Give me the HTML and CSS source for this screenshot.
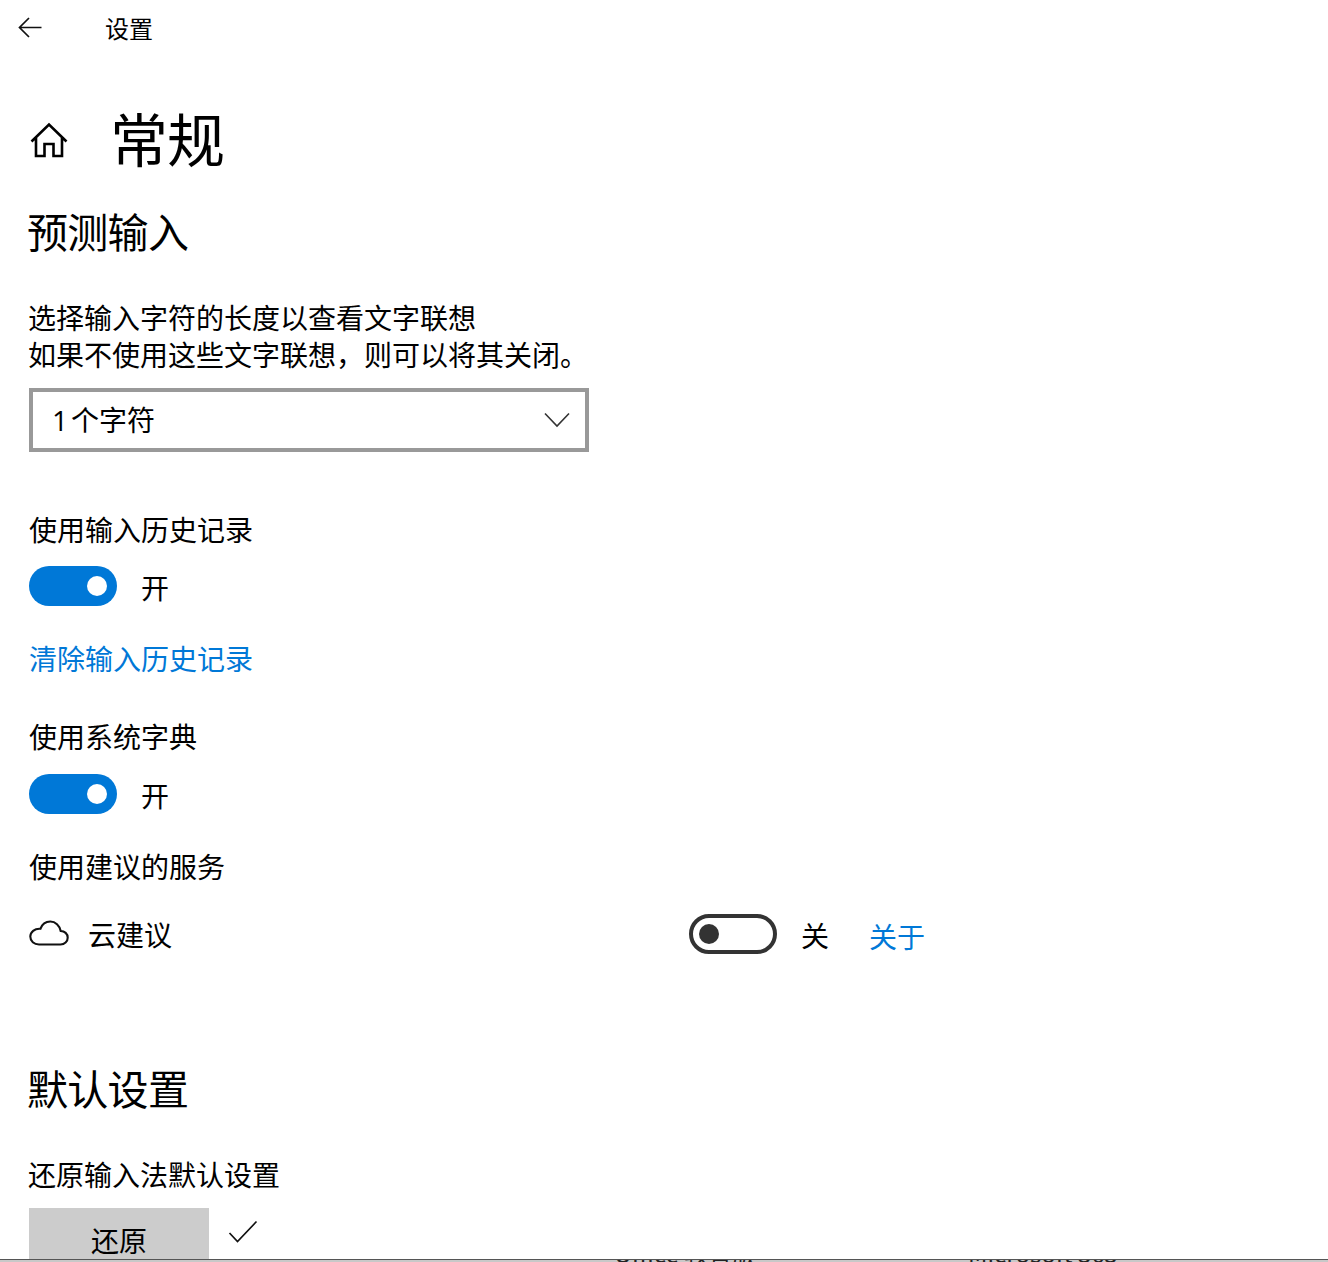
FILE: index.html
```html
<!DOCTYPE html>
<html lang="zh-CN">
<head>
<meta charset="utf-8">
<title>设置</title>
<link rel="stylesheet" href="styles.css">
</head>
<body>
<div class="page">
  <header class="topbar">
    <svg class="back-icon" width="24" height="22" viewBox="0 0 24 22"><path d="M23.5 10.5H1.5M11 1L1.5 10.5L11 20" fill="none" stroke="#111" stroke-width="1.7"/></svg>
    <span class="topbar-title">设置</span>
  </header>
  <main class="content">
    <div class="title-row">
      <svg class="home-icon" width="38" height="36" viewBox="0 0 38 36"><path d="M1.5 19.5L19 2.5L36.5 19.5M6 15.5V34H14.5V22H23.5V34H32V15.5" fill="none" stroke="#000" stroke-width="2.6"/></svg>
      <h1 class="title">常规</h1>
    </div>
    <h2 class="section-heading first-heading">预测输入</h2>
    <p class="desc">选择输入字符的长度以查看文字联想<br>如果不使用这些文字联想，则可以将其关闭。</p>
    <div class="select">
      <span class="select-text"><span class="select-num">1</span>个字符</span>
      <svg width="26" height="16" viewBox="0 0 26 16"><path d="M1 1.5L13 14L25 1.5" fill="none" stroke="#333" stroke-width="1.6"/></svg>
    </div>
    <div class="label label-history">使用输入历史记录</div>
    <div class="toggle-row row-history">
      <span class="toggle on"><i class="knob"></i></span>
      <span class="state">开</span>
    </div>
    <a class="link link-clear">清除输入历史记录</a>
    <div class="label label-dict">使用系统字典</div>
    <div class="toggle-row row-dict">
      <span class="toggle on"><i class="knob"></i></span>
      <span class="state">开</span>
    </div>
    <div class="label label-service">使用建议的服务</div>
    <div class="service-row">
      <div class="service-name">
        <svg class="cloud-icon" width="40" height="26" viewBox="0 0 40 26"><path d="M10 24.5H31.5C35.5 24.5 38.7 21.7 38.7 17.7C38.7 13.8 35.6 11 31.7 11C30.6 5.5 26.4 1.5 21.3 1.5C16.8 1.5 13 4.4 11.4 8.8C5.5 8.4 1.3 12 1.3 16.6C1.3 21.2 5 24.5 10 24.5Z" fill="none" stroke="#111" stroke-width="2.1"/></svg>
        <span>云建议</span>
      </div>
      <span class="toggle off"><i class="knob"></i></span>
      <span class="state">关</span>
      <a class="link link-about">关于</a>
    </div>
    <h2 class="section-heading defaults-heading">默认设置</h2>
    <div class="label label-restore">还原输入法默认设置</div>
    <div class="restore-row">
      <button class="restore-btn">还原</button>
      <svg class="check-icon" width="30" height="24" viewBox="0 0 30 24"><path d="M1.5 13L9.5 21.5L28.5 1.5" fill="none" stroke="#111" stroke-width="1.7"/></svg>
    </div>
  </main>
  <footer class="taskbar">
    <span class="task-one">Office 教育版</span>
    <span class="task-two">Microsoft 365</span>
  </footer>
</div>
</body>
</html>
```

FILE: styles.css
```css
* { box-sizing: border-box; }
html, body { margin: 0; padding: 0; background: #fff; }
body { font-family: "Noto Sans CJK SC", "Liberation Sans", sans-serif; color: #000; }
.page { position: relative; width: 1328px; height: 1262px; overflow: hidden; }

.topbar { display: flex; align-items: center; height: 58px; padding-left: 18px; }
.back-icon { display: block; margin-top: -3px; }
.topbar-title { margin-left: 63px; margin-top: -2px; font-size: 24px; line-height: 30px; }

.content { padding-left: 29px; }

.title-row { display: flex; align-items: center; height: 80px; margin-top: 42px; }
.home-icon { display: block; margin-left: 1px; margin-top: -1px; }
.title { margin: -6px 0 0 42px; font-size: 58px; font-weight: 400; letter-spacing: -1px; line-height: 80px; }

.section-heading { margin: 0 0 0 -2px; font-size: 41px; font-weight: 400; letter-spacing: -0.7px; line-height: 52px; }
.first-heading { margin-top: 24px; }
.defaults-heading { margin-top: 107px; }

.desc { margin: 43px 0 0 -1px; font-size: 28px; line-height: 37px; }

.select { display: flex; align-items: center; justify-content: space-between; width: 560px; height: 64px; margin-top: 15px; padding: 0 15px 0 19px; border: 4px solid #999; font-size: 28px; line-height: 38px; }
.select svg { display: block; }
.select-text { margin-top: -2px; }
.select-num { display: inline-block; width: 19px; font-family: "Open Sans", sans-serif; }

.label { font-size: 28px; line-height: 38px; }
.label-history { margin-top: 58px; }
.label-dict { margin-top: 40px; }
.label-service { margin-top: 33px; }
.label-restore { margin-top: 42px; margin-left: -1px; }

.toggle-row { display: flex; align-items: flex-start; height: 40px; }
.row-history { margin-top: 18px; }
.row-dict { margin-top: 19px; }

.toggle { display: flex; align-items: center; flex: none; width: 88px; height: 40px; border-radius: 20px; }
.toggle.on { justify-content: flex-end; padding-right: 10px; background: #0078d7; }
.toggle.on .knob { background: #fff; }
.toggle.off { border: 4px solid #333; padding-left: 6px; }
.toggle.off .knob { background: #333; }
.knob { display: block; width: 20px; height: 20px; border-radius: 50%; }

.state { margin-left: 24px; font-size: 28px; line-height: 42px; }

.link { display: block; color: #0078d7; font-size: 28px; line-height: 38px; }
.link-clear { margin-top: 33px; }
.link-about { margin-left: 40px; line-height: 44px; }

.service-row { display: flex; align-items: flex-start; height: 40px; margin-top: 29px; }
.service-name { display: flex; align-items: center; gap: 19px; width: 660px; height: 40px; font-size: 28px; }
.cloud-icon { display: block; margin-top: -2px; }

.restore-row { display: flex; align-items: flex-start; margin-top: 15px; }
.restore-btn { display: block; width: 180px; height: 68px; margin: 0; padding: 0 0 4px; border: 0; background: #ccc; color: #000; font: inherit; font-size: 28px; line-height: 38px; }
.check-icon { display: block; margin: 12px 0 0 19px; }

.taskbar { position: absolute; left: 0; right: 0; bottom: 0; height: 3px; overflow: hidden; background: #c8c8c8; border-top: 1px solid #555; font-size: 24px; line-height: 30px; color: #222; }
.task-one { position: absolute; left: 614px; top: -22px; white-space: nowrap; }
.task-two { position: absolute; left: 968px; top: -22px; white-space: nowrap; }
```
